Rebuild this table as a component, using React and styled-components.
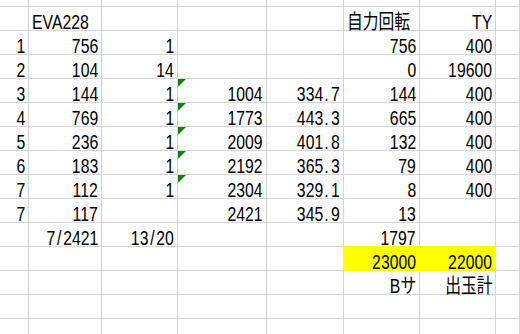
import React from "react";
import styled, { createGlobalStyle } from "styled-components";

const GlobalStyle = createGlobalStyle`
  html, body {
    margin: 0;
    padding: 0;
    background: #ffffff;
    overflow: hidden;
  }
`;

// 各行: 8列 (行番号, B..G, 余白)
const rows = [
  [],
  ["", { t: "EVA228", left: true }, "", "", "", { t: "自力回転", left: true }, "TY", ""],
  ["1", "756", "1", "", "", "756", "400", ""],
  ["2", "104", "14", "", "", "0", "19600", ""],
  ["3", "144", "1", { t: "1004", flag: true }, "334.7", "144", "400", ""],
  ["4", "769", "1", { t: "1773", flag: true }, "443.3", "665", "400", ""],
  ["5", "236", "1", { t: "2009", flag: true }, "401.8", "132", "400", ""],
  ["6", "183", "1", { t: "2192", flag: true }, "365.3", "79", "400", ""],
  ["7", "112", "1", { t: "2304", flag: true }, "329.1", "8", "400", ""],
  ["7", "117", "", "2421", "345.9", "13", "", ""],
  ["", "7/2421", "13/20", "", "", "1797", "", ""],
  ["", "", "", "", "", { t: "23000", fill: true }, { t: "22000", fill: true }, ""],
  ["", "", "", "", "", "Bサ", "出玉計", ""],
  [],
  [],
];

const COLS = 8;

const CellText = ({ text }) => {
  // 「.」「/」はExcelの等幅フォント風に広めに取る
  const parts = text.split(/([./])/);
  if (parts.length === 1) return text;
  return parts.map((p, i) =>
    p === "." || p === "/" ? (
      <Wide key={i} $dot={p === "."}>
        {p}
      </Wide>
    ) : (
      p
    )
  );
};

const App = () => {
  return (
    <>
      <GlobalStyle />
      <Sheet>
        {rows.map((row, r) =>
          Array.from({ length: COLS }).map((_, c) => {
            const raw = row[c] ?? "";
            const cell = typeof raw === "string" ? { t: raw } : raw;
            return (
              <Cell key={`${r}-${c}`} $left={cell.left} $fill={cell.fill}>
                {cell.flag && <Flag />}
                {cell.t && (
                  <Text $left={cell.left}>
                    <CellText text={cell.t} />
                  </Text>
                )}
              </Cell>
            );
          })
        )}
      </Sheet>
    </>
  );
};

export default App;

const Sheet = styled.div`
  display: grid;
  grid-template-columns: 29px 73px 76px 89px 77px 76px 76px 1fr;
  grid-template-rows: 7px repeat(14, 24px);
  width: 520px;
  height: 334px;
  overflow: hidden;
  font-family: "Liberation Sans", "Noto Sans CJK JP", sans-serif;
  font-size: 20.5px;
  color: #000000;
`;

const Cell = styled.div`
  position: relative;
  box-sizing: border-box;
  display: flex;
  align-items: flex-end;
  justify-content: ${(p) => (p.$left ? "flex-start" : "flex-end")};
  padding: 0 3px;
  border-right: 1px solid ${(p) => (p.$fill ? "#ffff00" : "#d4d4d4")};
  border-bottom: 1px solid ${(p) => (p.$fill ? "#ffff00" : "#d4d4d4")};
  background: ${(p) => (p.$fill ? "#ffff00" : "transparent")};
  box-shadow: ${(p) => (p.$fill ? "-1px -1px 0 #ffff00" : "none")};
  white-space: nowrap;
  min-width: 0;
`;

const Text = styled.span`
  display: inline-block;
  line-height: 16px;
  transform: scaleX(0.77);
  transform-origin: ${(p) => (p.$left ? "left bottom" : "right bottom")};
`;

const Wide = styled.span`
  display: inline-block;
  width: 0.5em;
  text-align: ${(p) => (p.$dot ? "left" : "center")};
  padding-left: ${(p) => (p.$dot ? "0.06em" : "0")};
  box-sizing: border-box;
`;

const Flag = styled.span`
  position: absolute;
  top: 0;
  left: 0;
  width: 0;
  height: 0;
  border-top: 8px solid #1a7a1a;
  border-right: 8px solid transparent;
`;
